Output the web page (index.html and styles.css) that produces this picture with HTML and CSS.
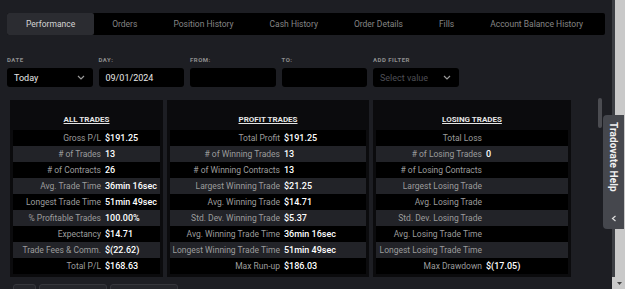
FILE: index.html
```html
<!DOCTYPE html>
<html>
    <head>
        <title>Performance</title>
        <meta charset="utf-8" />
        <link rel="stylesheet" href="styles.css">
    </head>
    <body>
        <div class="app">
            <main class="content">
                <nav class="tabs">
                    <a class="tab active">Performance</a>
                    <a class="tab">Orders</a>
                    <a class="tab">Position History</a>
                    <a class="tab">Cash History</a>
                    <a class="tab">Order Details</a>
                    <a class="tab">Fills</a>
                    <a class="tab">Account Balance History</a>
                </nav>

                <section class="filters">
                    <div class="field">
                        <label>Date</label>
                        <div class="input select">
                            <span>Today</span>
                            <svg width="8" height="5" viewBox="0 0 8 5"><path d="M1 1 L4 4 L7 1" fill="none" stroke="#9a9a9a" stroke-width="1.2"/></svg>
                        </div>
                    </div>
                    <div class="field">
                        <label>Day:</label>
                        <div class="input"><span>09/01/2024</span></div>
                    </div>
                    <div class="field">
                        <label>From:</label>
                        <div class="input"></div>
                    </div>
                    <div class="field">
                        <label>To:</label>
                        <div class="input"></div>
                    </div>
                    <div class="field">
                        <label>Add Filter</label>
                        <div class="input select">
                            <span class="placeholder">Select value</span>
                            <svg width="8" height="5" viewBox="0 0 8 5"><path d="M1 1 L4 4 L7 1" fill="none" stroke="#9a9a9a" stroke-width="1.2"/></svg>
                        </div>
                    </div>
                </section>

                <section class="stats">
                    <div class="card all">
                        <h3>ALL TRADES</h3>
                        <div class="row"><span class="label">Gross P/L</span><span class="value">$191.25</span></div>
                        <div class="row"><span class="label"># of Trades</span><span class="value">13</span></div>
                        <div class="row"><span class="label"># of Contracts</span><span class="value">26</span></div>
                        <div class="row"><span class="label">Avg. Trade Time</span><span class="value">36min 16sec</span></div>
                        <div class="row"><span class="label">Longest Trade Time</span><span class="value">51min 49sec</span></div>
                        <div class="row"><span class="label">% Profitable Trades</span><span class="value">100.00%</span></div>
                        <div class="row"><span class="label">Expectancy</span><span class="value">$14.71</span></div>
                        <div class="row"><span class="label">Trade Fees &amp; Comm.</span><span class="value">$(22.62)</span></div>
                        <div class="row"><span class="label">Total P/L</span><span class="value">$168.63</span></div>
                    </div>
                    <div class="card profit">
                        <h3>PROFIT TRADES</h3>
                        <div class="row"><span class="label">Total Profit</span><span class="value">$191.25</span></div>
                        <div class="row"><span class="label"># of Winning Trades</span><span class="value">13</span></div>
                        <div class="row"><span class="label"># of Winning Contracts</span><span class="value">13</span></div>
                        <div class="row"><span class="label">Largest Winning Trade</span><span class="value">$21.25</span></div>
                        <div class="row"><span class="label">Avg. Winning Trade</span><span class="value">$14.71</span></div>
                        <div class="row"><span class="label">Std. Dev. Winning Trade</span><span class="value">$5.37</span></div>
                        <div class="row"><span class="label">Avg. Winning Trade Time</span><span class="value">36min 16sec</span></div>
                        <div class="row"><span class="label">Longest Winning Trade Time</span><span class="value">51min 49sec</span></div>
                        <div class="row"><span class="label">Max Run-up</span><span class="value">$186.03</span></div>
                    </div>
                    <div class="card losing">
                        <h3>LOSING TRADES</h3>
                        <div class="row"><span class="label">Total Loss</span><span class="value"></span></div>
                        <div class="row"><span class="label"># of Losing Trades</span><span class="value">0</span></div>
                        <div class="row"><span class="label"># of Losing Contracts</span><span class="value"></span></div>
                        <div class="row"><span class="label">Largest Losing Trade</span><span class="value"></span></div>
                        <div class="row"><span class="label">Avg. Losing Trade</span><span class="value"></span></div>
                        <div class="row"><span class="label">Std. Dev. Losing Trade</span><span class="value"></span></div>
                        <div class="row"><span class="label">Avg. Losing Trade Time</span><span class="value"></span></div>
                        <div class="row"><span class="label">Longest Losing Trade Time</span><span class="value"></span></div>
                        <div class="row"><span class="label">Max Drawdown</span><span class="value">$(17.05)</span></div>
                    </div>
                </section>

                <section class="actions">
                    <button class="btn small"></button>
                    <button class="btn"></button>
                    <button class="btn"></button>
                </section>

                <div class="thumb"></div>
            </main>

            <aside class="track">
                <div class="rail"></div>
                <svg class="arrow" width="5" height="3" viewBox="0 0 5 3"><path d="M0 0 H5 L2.5 3 Z" fill="#444"/></svg>
            </aside>

            <div class="help">
                <span class="help-text">Tradovate Help</span>
                <svg width="6" height="7" viewBox="0 0 6 7"><path d="M4.5 1 L1.5 3.5 L4.5 6" fill="none" stroke="#ddd" stroke-width="1.2"/></svg>
            </div>
        </div>
    </body>
</html>
```

FILE: styles.css
```css
* {
    box-sizing: border-box;
    margin: 0;
    padding: 0;
    font-family: Roboto, 'Liberation Sans', sans-serif;
}
html, body {
    height: 100%;
    overflow: hidden;
}
body {
    background-color: #1d1e23;
}
.app {
    display: flex;
    height: 100%;
    position: relative;
}
.content {
    flex: 0 0 612px;
    position: relative;
    padding-top: 13px;
}

/* tabs */
.tabs {
    display: flex;
    height: 22px;
    margin: 0 7px;
    background-color: #000;
    border-radius: 2px;
}
.tab {
    display: flex;
    align-items: center;
    padding: 0 18px;
    font-size: 8.5px;
    color: #858585;
    white-space: nowrap;
}
.tab.active {
    background-color: #2b2c31;
    color: #d4d4d4;
    border-radius: 2px;
    padding: 0 19px;
}

/* filters */
.filters {
    display: flex;
    gap: 6px;
    margin: 21px 7px 0;
}
.field {
    display: flex;
    flex-direction: column;
    width: 85.5px;
}
.field label {
    font-size: 6px;
    font-weight: 700;
    letter-spacing: 0.5px;
    text-transform: uppercase;
    color: #8e8e8e;
    height: 12px;
    line-height: 8px;
}
.input {
    display: flex;
    align-items: center;
    justify-content: space-between;
    height: 19px;
    padding: 0 8px 0 7px;
    background-color: #000;
    border-radius: 3px;
    font-size: 9px;
    color: #e8e8e8;
}
.input .placeholder {
    color: #4e4f55;
}

/* stat cards */
.stats {
    display: flex;
    gap: 4px;
    margin: 13px 0 0 10px;
}
.card {
    background-color: #0b0b0d;
    padding: 0 3px 3px;
}
.card.all { width: 153px; }
.card.profit { width: 202px; }
.card.losing { width: 198px; }
.card h3 {
    height: 30px;
    padding-top: 15px;
    text-align: center;
    font-size: 8px;
    font-weight: 700;
    color: #e6e6e6;
    text-decoration: underline;
    line-height: 10px;
}
.row {
    display: grid;
    grid-template-columns: 88px 1fr;
    column-gap: 4px;
    height: 16px;
    align-items: center;
    background-color: #000;
    font-size: 8.5px;
    white-space: nowrap;
}
.row:nth-of-type(even) {
    background-color: #222328;
}
.card.profit .row { grid-template-columns: 110px 1fr; }
.card.losing .row { grid-template-columns: 106px 1fr; }
.label {
    text-align: right;
    color: #9c9c9c;
}
.value {
    color: #fff;
    font-weight: 500;
    font-size: 9px;
}

/* bottom buttons */
.actions {
    display: flex;
    gap: 3px;
    margin: 7px 0 0 13px;
}
.btn {
    width: 68px;
    height: 16px;
    background-color: #25262b;
    border: 1px solid #35363b;
    border-radius: 3px;
}
.btn.small {
    width: 23px;
}

.thumb {
    position: absolute;
    left: 598px;
    top: 98px;
    width: 4px;
    height: 30px;
    border-radius: 2px;
    background-color: #4b4c51;
}

/* outer scrollbar */
.track {
    flex: 1;
    display: flex;
    position: relative;
    background-color: #c9c9c9;
}
.rail {
    width: 3px;
    height: 277px;
    background-color: #3c3e43;
}
.arrow {
    position: absolute;
    right: 3px;
    bottom: 4px;
}

/* help tab */
.help {
    position: absolute;
    left: 603px;
    top: 115px;
    width: 21px;
    height: 114px;
    display: flex;
    flex-direction: column;
    align-items: center;
    padding-top: 7px;
    background-color: #45474d;
    border-radius: 4px 0 0 4px;
}
.help-text {
    writing-mode: vertical-rl;
    font-size: 10px;
    font-weight: 700;
    color: #f0f0f0;
    letter-spacing: 0.1px;
}
.help svg {
    margin-top: 23px;
}
```
